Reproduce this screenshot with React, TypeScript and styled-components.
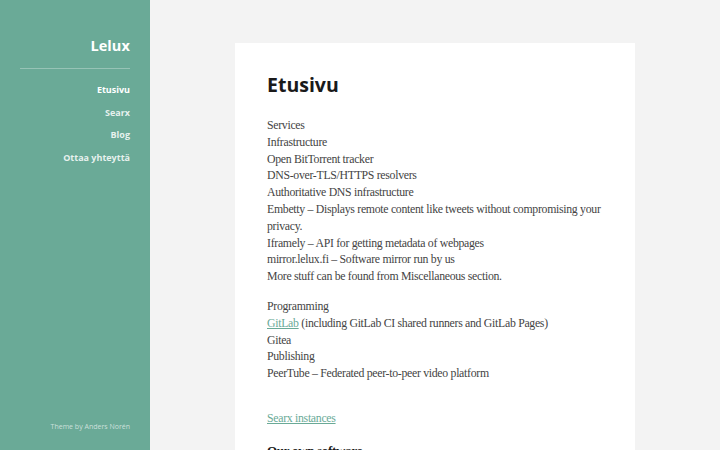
import React, { FC } from "react";
import styled, { createGlobalStyle } from "styled-components";

const accent = "#6aaa97";

const GlobalStyle = createGlobalStyle`
	html, body {
		margin: 0;
		padding: 0;
		height: 100%;
		overflow: hidden;
		background: #f3f3f3;
	}
	#root {
		height: 100%;
	}
`;

const Page = styled.div`
	display: flex;
	height: 450px;
	width: 720px;
`;

const Sidebar = styled.aside`
	width: 150px;
	flex-shrink: 0;
	background: ${accent};
	display: flex;
	flex-direction: column;
	align-items: flex-end;
	padding: 36px 20px 19px 20px;
	box-sizing: border-box;
	font-family: "Open Sans", "DejaVu Sans", sans-serif;
`;

const SiteTitle = styled.h1`
	margin: 0;
	font-size: 14.5px;
	font-weight: 700;
	color: #fff;
	line-height: 20px;
	letter-spacing: 0.1px;
`;

const Divider = styled.hr`
	width: 100%;
	margin: 12px 0 14px 0;
	border: none;
	border-top: 1px solid rgba(255, 255, 255, 0.3);
`;

const Nav = styled.nav`
	display: flex;
	flex-direction: column;
	align-items: flex-end;
	gap: 8px;
`;

const NavLink = styled.a<{ active?: boolean }>`
	font-size: 9px;
	font-weight: 700;
	line-height: 14.5px;
	text-decoration: none;
	color: ${({ active }) => (active ? "#fff" : "rgba(255, 255, 255, 0.85)")};
`;

const Credit = styled.p`
	margin: auto 0 0 0;
	font-size: 7px;
	color: rgba(255, 255, 255, 0.65);
`;

const Main = styled.main`
	flex: 1;
	display: flex;
	justify-content: center;
	padding-top: 43px;
`;

const Card = styled.article`
	width: 400px;
	background: #fff;
	padding: 31px 32px 0 32px;
	box-sizing: border-box;
`;

const Title = styled.h2`
	margin: 0 0 21px 0;
	font-family: "Open Sans", "DejaVu Sans", sans-serif;
	font-size: 19.5px;
	font-weight: 700;
	color: #1a1a1a;
	line-height: 22px;
`;

const Body = styled.div`
	font-family: "Liberation Serif", "DejaVu Serif", serif;
	font-size: 11.8px;
	letter-spacing: -0.3px;
	line-height: 16.8px;
	color: #444;
`;

const Para = styled.p<{ gap?: number }>`
	margin: 0 0 ${({ gap = 13 }) => gap}px 0;
`;

const Link = styled.a`
	color: ${accent};
	text-decoration: underline;
`;

const Subhead = styled.h3`
	margin: 0;
	font-family: "Liberation Serif", "DejaVu Serif", serif;
	font-size: 13px;
	font-weight: 700;
	line-height: 17px;
	color: #1a1a1a;
`;

const navItems = ["Etusivu", "Searx", "Blog", "Ottaa yhteyttä"];

const App: FC = () => {
	return (
		<>
			<GlobalStyle />
			<Page>
				<Sidebar>
					<SiteTitle>Lelux</SiteTitle>
					<Divider />
					<Nav>
						{navItems.map((item, i) => (
							<NavLink key={item} active={i === 0}>
								{item}
							</NavLink>
						))}
					</Nav>
					<Credit>Theme by Anders Norén</Credit>
				</Sidebar>
				<Main>
					<Card>
						<Title>Etusivu</Title>
						<Body>
							<Para>
								Services
								<br />
								Infrastructure
								<br />
								Open BitTorrent tracker
								<br />
								DNS-over-TLS/HTTPS resolvers
								<br />
								Authoritative DNS infrastructure
								<br />
								Embetty – Displays remote content like tweets without compromising your
								privacy.
								<br />
								Iframely – API for getting metadata of webpages
								<br />
								mirror.lelux.fi – Software mirror run by us
								<br />
								More stuff can be found from Miscellaneous section.
							</Para>
							<Para gap={28}>
								Programming
								<br />
								<Link>GitLab</Link> (including GitLab CI shared runners and GitLab Pages)
								<br />
								Gitea
								<br />
								Publishing
								<br />
								PeerTube – Federated peer-to-peer video platform
							</Para>
							<Para gap={15}>
								<Link>Searx instances</Link>
							</Para>
							<Subhead>Our own software</Subhead>
						</Body>
					</Card>
				</Main>
			</Page>
		</>
	);
};

export default App;
